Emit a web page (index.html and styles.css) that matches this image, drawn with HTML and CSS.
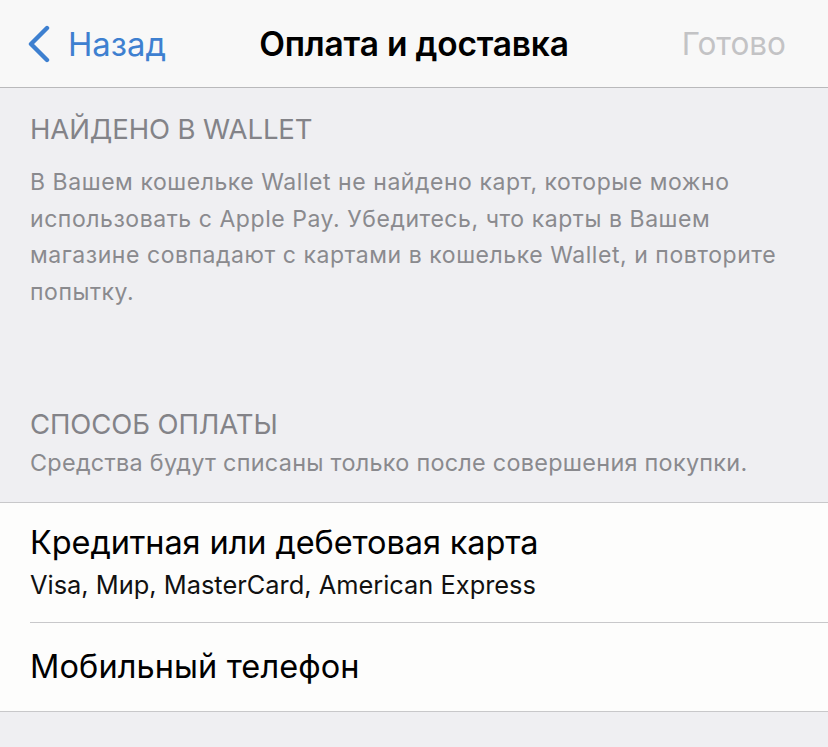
FILE: index.html
```html
<!DOCTYPE html>
<html lang="ru">
<head>
<meta charset="utf-8">
<link rel="stylesheet" href="styles.css">
</head>
<body>
<header class="nav">
  <div class="nav-back">
    <svg class="chev" width="26" height="38" viewBox="0 0 26 38"><path d="M21 3 L5 19 L21 35" fill="none" stroke="#3e80d0" stroke-width="4.4" stroke-linecap="round" stroke-linejoin="round"/></svg>
    <span class="back-text">Назад</span>
  </div>
  <div class="nav-title">Оплата и доставка</div>
  <div class="nav-done">Готово</div>
</header>
<main>
  <section class="group first">
    <h2 class="group-head">НАЙДЕНО В WALLET</h2>
    <p class="group-note">В Вашем кошельке Wallet не найдено карт, которые можно использовать с Apple Pay. Убедитесь, что карты в Вашем магазине совпадают с картами в кошельке Wallet, и повторите попытку.</p>
  </section>
  <section class="group second">
    <h2 class="group-head">СПОСОБ ОПЛАТЫ</h2>
    <p class="group-note single">Средства будут списаны только после совершения покупки.</p>
  </section>
  <ul class="list">
    <li class="row">
      <div class="row-title">Кредитная или дебетовая карта</div>
      <div class="row-sub">Visa, Мир, MasterCard, American Express</div>
    </li>
    <li class="row single-row">
      <div class="row-title">Мобильный телефон</div>
    </li>
  </ul>
</main>
</body>
</html>
```
FILE: styles.css
```css
html, body {
  margin: 0;
  padding: 0;
}
body {
  width: 828px;
  height: 747px;
  overflow: hidden;
  background: #efeff2;
  font-family: "Inter", "Noto Sans", sans-serif;
}
.nav {
  height: 88px;
  box-sizing: border-box;
  background: #f8f8f8;
  border-bottom: 1px solid #b9b9bb;
  display: flex;
  align-items: center;
  padding: 0 42px;
}
.nav-back {
  display: flex;
  align-items: center;
  gap: 16px;
  color: #3e80d0;
  font-size: 32.8px;
  flex: 1;
  margin-left: -16px;
  margin-right: 16px;
}
.chev { display: block; }
.nav-title {
  font-size: 33.5px;
  font-weight: 600;
  color: #000;
  text-align: center;
  flex: 0 0 auto;
  letter-spacing: -0.2px;
}
.nav-done {
  flex: 1;
  text-align: right;
  color: #c3c3c5;
  font-size: 31.5px;
}
.group {
  padding: 0 30px;
}
.group.first {
  padding-top: 26px;
  height: 321px;
  box-sizing: border-box;
}
.group-head {
  margin: 0;
  font-size: 27.5px;
  font-weight: 400;
  color: #838388;
  letter-spacing: -0.1px;
  line-height: 30px;
}
.group-note {
  margin: 20px 0 0;
  font-size: 23px;
  line-height: 36.5px;
  color: #8a8a8e;
  letter-spacing: 0.55px;
}
.group.second {
  padding-bottom: 20px;
}
.group-note.single {
  margin-top: 6px;
  font-size: 23.4px;
  letter-spacing: 0.28px;
}
.list {
  list-style: none;
  margin: 0;
  padding: 0 0 0 30px;
  background: #fdfdfc;
  border-top: 1px solid #c8c8ca;
  border-bottom: 1px solid #c8c8ca;
}
.row {
  padding: 20px 0 19px;
  border-bottom: 1px solid #c8c8ca;
}
.row:last-child { border-bottom: none; }
.row-title {
  font-size: 32.5px;
  line-height: 40px;
  color: #000;
  letter-spacing: -0.1px;
}
.single-row .row-title {
  letter-spacing: 0.1px;
}
.row-sub {
  margin-top: 4px;
  font-size: 25.4px;
  line-height: 36px;
  color: #111;
}
.single-row {
  padding: 24px 0 24px;
}
```
